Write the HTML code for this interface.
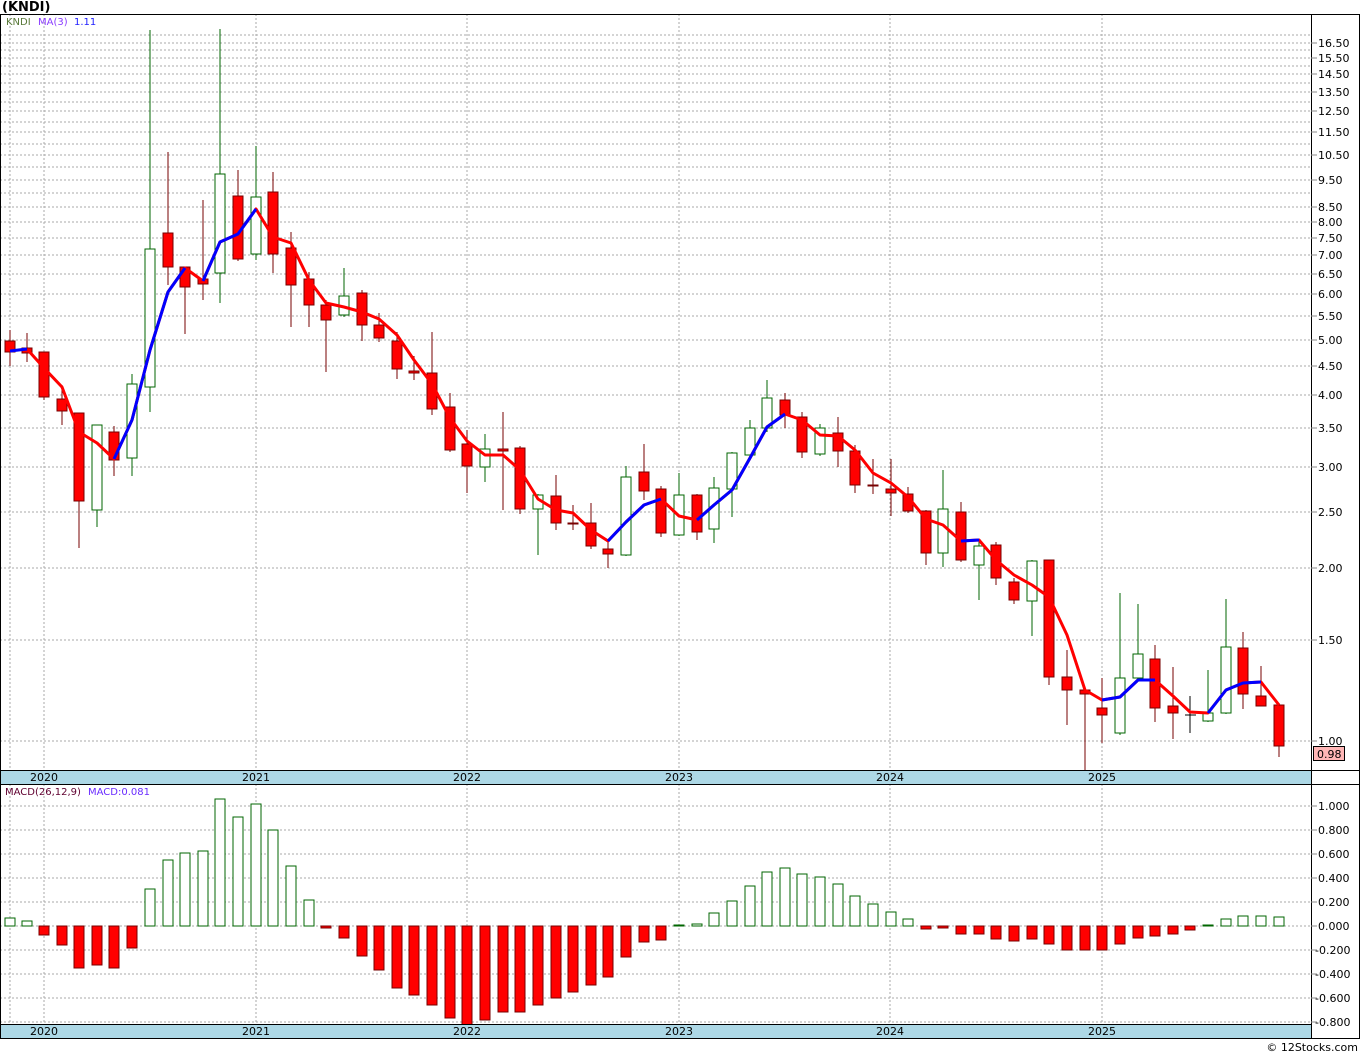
<!DOCTYPE html>
<html><head><meta charset="utf-8"><style>
html,body{margin:0;padding:0;background:#fff;width:1360px;height:1056px;overflow:hidden}
svg{display:block;font-family:"DejaVu Sans","Liberation Sans",sans-serif}
.gr line{stroke:#aaa;stroke-dasharray:2 2;stroke-width:1}
.r rect{fill:#f00;stroke:#700;stroke-width:1}
.r line{stroke:#700;stroke-width:1}
.g rect{fill:#fff;stroke:#060;stroke-width:1}
.g line{stroke:#060;stroke-width:1}
.lab text{font-size:11px;fill:#000}
.mr rect{fill:#f00;stroke:#700}
.mg rect{fill:#fff;stroke:#060}
</style></head><body>
<svg width="1360" height="1056" viewBox="0 0 1360 1056" xmlns="http://www.w3.org/2000/svg">
<text x="2" y="11" font-size="13" font-weight="bold">(KNDI)</text>
<!-- price grid -->
<g class="gr">
<line x1="0" x2="1311" y1="741" y2="741"/><line x1="0" x2="1311" y1="640" y2="640"/><line x1="0" x2="1311" y1="568" y2="568"/><line x1="0" x2="1311" y1="512" y2="512"/><line x1="0" x2="1311" y1="467" y2="467"/><line x1="0" x2="1311" y1="428" y2="428"/><line x1="0" x2="1311" y1="395" y2="395"/><line x1="0" x2="1311" y1="366" y2="366"/><line x1="0" x2="1311" y1="340" y2="340"/><line x1="0" x2="1311" y1="316" y2="316"/><line x1="0" x2="1311" y1="294" y2="294"/><line x1="0" x2="1311" y1="274" y2="274"/><line x1="0" x2="1311" y1="255" y2="255"/><line x1="0" x2="1311" y1="238" y2="238"/><line x1="0" x2="1311" y1="222" y2="222"/><line x1="0" x2="1311" y1="207" y2="207"/><line x1="0" x2="1311" y1="193" y2="193"/><line x1="0" x2="1311" y1="180" y2="180"/><line x1="0" x2="1311" y1="167" y2="167"/><line x1="0" x2="1311" y1="155" y2="155"/><line x1="0" x2="1311" y1="144" y2="144"/><line x1="0" x2="1311" y1="132" y2="132"/><line x1="0" x2="1311" y1="122" y2="122"/><line x1="0" x2="1311" y1="111" y2="111"/><line x1="0" x2="1311" y1="102" y2="102"/><line x1="0" x2="1311" y1="92" y2="92"/><line x1="0" x2="1311" y1="83" y2="83"/><line x1="0" x2="1311" y1="74" y2="74"/><line x1="0" x2="1311" y1="66" y2="66"/><line x1="0" x2="1311" y1="58" y2="58"/><line x1="0" x2="1311" y1="50" y2="50"/><line x1="0" x2="1311" y1="43" y2="43"/><line x1="0" x2="1311" y1="35" y2="35"/>
<line x1="10" x2="10" y1="14" y2="770"/><line x1="44" x2="44" y1="14" y2="770"/><line x1="256" x2="256" y1="14" y2="770"/><line x1="467" x2="467" y1="14" y2="770"/><line x1="679" x2="679" y1="14" y2="770"/><line x1="890" x2="890" y1="14" y2="770"/><line x1="1102" x2="1102" y1="14" y2="770"/>
<line x1="10" x2="10" y1="784" y2="1024"/><line x1="44" x2="44" y1="784" y2="1024"/><line x1="256" x2="256" y1="784" y2="1024"/><line x1="467" x2="467" y1="784" y2="1024"/><line x1="679" x2="679" y1="784" y2="1024"/><line x1="890" x2="890" y1="784" y2="1024"/><line x1="1102" x2="1102" y1="784" y2="1024"/>
<line x1="0" x2="1311" y1="806" y2="806"/><line x1="0" x2="1311" y1="830" y2="830"/><line x1="0" x2="1311" y1="854" y2="854"/><line x1="0" x2="1311" y1="878" y2="878"/><line x1="0" x2="1311" y1="902" y2="902"/><line x1="0" x2="1311" y1="926" y2="926"/><line x1="0" x2="1311" y1="950" y2="950"/><line x1="0" x2="1311" y1="974" y2="974"/><line x1="0" x2="1311" y1="998" y2="998"/><line x1="0" x2="1311" y1="1022" y2="1022"/>
</g>
<text x="6" y="25" font-size="10" fill="#5a7a3a">KNDI</text><text x="38" y="25" font-size="10" fill="#8a3cff">MA(3)</text><text x="74" y="25" font-size="10" fill="#2020ff">1.11</text>
<!-- candles red -->
<g class="r">
<line x1="10" x2="10" y1="330" y2="366"/><rect x="5" y="341" width="10" height="11"/>
<line x1="27" x2="27" y1="333" y2="362"/><rect x="22" y="348" width="10" height="5"/>
<line x1="44" x2="44" y1="352" y2="400"/><rect x="39" y="352" width="10" height="45"/>
<line x1="62" x2="62" y1="385" y2="425"/><rect x="57" y="399" width="10" height="12"/>
<line x1="79" x2="79" y1="413" y2="548"/><rect x="74" y="413" width="10" height="88"/>
<line x1="114" x2="114" y1="426" y2="476"/><rect x="109" y="432" width="10" height="28"/>
<line x1="168" x2="168" y1="152" y2="285"/><rect x="163" y="233" width="10" height="34"/>
<line x1="185" x2="185" y1="267" y2="334"/><rect x="180" y="267" width="10" height="20"/>
<line x1="203" x2="203" y1="200" y2="300"/><rect x="198" y="279" width="10" height="5"/>
<line x1="238" x2="238" y1="170" y2="261"/><rect x="233" y="196" width="10" height="63"/>
<line x1="273" x2="273" y1="172" y2="273"/><rect x="268" y="192" width="10" height="62"/>
<line x1="291" x2="291" y1="232" y2="327"/><rect x="286" y="248" width="10" height="37"/>
<line x1="309" x2="309" y1="272" y2="327"/><rect x="304" y="279" width="10" height="26"/>
<line x1="326" x2="326" y1="300" y2="372"/><rect x="321" y="305" width="10" height="15"/>
<line x1="362" x2="362" y1="290" y2="341"/><rect x="357" y="293" width="10" height="32"/>
<line x1="379" x2="379" y1="313" y2="342"/><rect x="374" y="325" width="10" height="13"/>
<line x1="397" x2="397" y1="332" y2="379"/><rect x="392" y="341" width="10" height="28"/>
<line x1="414" x2="414" y1="356" y2="380"/><rect x="409" y="371" width="10" height="2"/>
<line x1="432" x2="432" y1="332" y2="415"/><rect x="427" y="373" width="10" height="36"/>
<line x1="450" x2="450" y1="393" y2="452"/><rect x="445" y="407" width="10" height="43"/>
<line x1="467" x2="467" y1="430" y2="493"/><rect x="462" y="444" width="10" height="22"/>
<line x1="503" x2="503" y1="412" y2="510"/><rect x="498" y="449" width="10" height="2"/>
<line x1="520" x2="520" y1="446" y2="514"/><rect x="515" y="448" width="10" height="61"/>
<line x1="556" x2="556" y1="475" y2="530"/><rect x="551" y="496" width="10" height="27"/>
<line x1="573" x2="573" y1="505" y2="530"/><rect x="568" y="523" width="10" height="1"/>
<line x1="591" x2="591" y1="503" y2="549"/><rect x="586" y="523" width="10" height="23"/>
<line x1="608" x2="608" y1="540" y2="568"/><rect x="603" y="549" width="10" height="5"/>
<line x1="644" x2="644" y1="444" y2="500"/><rect x="639" y="472" width="10" height="19"/>
<line x1="661" x2="661" y1="486" y2="537"/><rect x="656" y="489" width="10" height="44"/>
<line x1="697" x2="697" y1="494" y2="540"/><rect x="692" y="495" width="10" height="37"/>
<line x1="785" x2="785" y1="393" y2="428"/><rect x="780" y="400" width="10" height="15"/>
<line x1="802" x2="802" y1="412" y2="458"/><rect x="797" y="417" width="10" height="35"/>
<line x1="838" x2="838" y1="417" y2="467"/><rect x="833" y="433" width="10" height="18"/>
<line x1="855" x2="855" y1="445" y2="493"/><rect x="850" y="451" width="10" height="34"/>
<line x1="873" x2="873" y1="459" y2="494"/><rect x="868" y="485" width="10" height="1"/>
<line x1="891" x2="891" y1="459" y2="516"/><rect x="886" y="489" width="10" height="4"/>
<line x1="908" x2="908" y1="487" y2="513"/><rect x="903" y="494" width="10" height="17"/>
<line x1="926" x2="926" y1="510" y2="565"/><rect x="921" y="511" width="10" height="42"/>
<line x1="961" x2="961" y1="502" y2="562"/><rect x="956" y="512" width="10" height="48"/>
<line x1="996" x2="996" y1="542" y2="585"/><rect x="991" y="545" width="10" height="33"/>
<line x1="1014" x2="1014" y1="578" y2="604"/><rect x="1009" y="582" width="10" height="18"/>
<line x1="1049" x2="1049" y1="560" y2="685"/><rect x="1044" y="560" width="10" height="117"/>
<line x1="1067" x2="1067" y1="650" y2="725"/><rect x="1062" y="677" width="10" height="13"/>
<line x1="1085" x2="1085" y1="690" y2="770"/><rect x="1080" y="690" width="10" height="4"/>
<line x1="1102" x2="1102" y1="678" y2="743"/><rect x="1097" y="708" width="10" height="7"/>
<line x1="1155" x2="1155" y1="645" y2="722"/><rect x="1150" y="659" width="10" height="49"/>
<line x1="1173" x2="1173" y1="667" y2="739"/><rect x="1168" y="706" width="10" height="7"/>
<line x1="1243" x2="1243" y1="632" y2="709"/><rect x="1238" y="648" width="10" height="46"/>
<line x1="1261" x2="1261" y1="666" y2="706"/><rect x="1256" y="696" width="10" height="10"/>
<line x1="1279" x2="1279" y1="703" y2="757"/><rect x="1274" y="705" width="10" height="41"/>
</g>
<g stroke="#000"><line x1="1190" x2="1190" y1="696" y2="733"/><line x1="1185" x2="1196" y1="715" y2="715"/></g>
<!-- candles green -->
<g class="g">
<line x1="97" x2="97" y1="425" y2="527"/><rect x="92" y="425" width="10" height="85"/>
<line x1="132" x2="132" y1="374" y2="476"/><rect x="127" y="384" width="10" height="74"/>
<line x1="150" x2="150" y1="30" y2="412"/><rect x="145" y="249" width="10" height="138"/>
<line x1="220" x2="220" y1="29" y2="303"/><rect x="215" y="174" width="10" height="99"/>
<line x1="256" x2="256" y1="146" y2="260"/><rect x="251" y="197" width="10" height="57"/>
<line x1="344" x2="344" y1="268" y2="317"/><rect x="339" y="296" width="10" height="19"/>
<line x1="485" x2="485" y1="434" y2="482"/><rect x="480" y="449" width="10" height="18"/>
<line x1="538" x2="538" y1="494" y2="555"/><rect x="533" y="495" width="10" height="14"/>
<line x1="626" x2="626" y1="466" y2="556"/><rect x="621" y="477" width="10" height="78"/>
<line x1="679" x2="679" y1="473" y2="536"/><rect x="674" y="495" width="10" height="40"/>
<line x1="714" x2="714" y1="477" y2="543"/><rect x="709" y="488" width="10" height="41"/>
<line x1="732" x2="732" y1="452" y2="517"/><rect x="727" y="453" width="10" height="36"/>
<line x1="750" x2="750" y1="420" y2="458"/><rect x="745" y="428" width="10" height="27"/>
<line x1="767" x2="767" y1="380" y2="432"/><rect x="762" y="398" width="10" height="30"/>
<line x1="820" x2="820" y1="424" y2="456"/><rect x="815" y="428" width="10" height="26"/>
<line x1="943" x2="943" y1="470" y2="567"/><rect x="938" y="509" width="10" height="44"/>
<line x1="979" x2="979" y1="540" y2="600"/><rect x="974" y="546" width="10" height="19"/>
<line x1="1032" x2="1032" y1="560" y2="636"/><rect x="1027" y="561" width="10" height="40"/>
<line x1="1120" x2="1120" y1="593" y2="735"/><rect x="1115" y="678" width="10" height="55"/>
<line x1="1138" x2="1138" y1="604" y2="680"/><rect x="1133" y="654" width="10" height="24"/>
<line x1="1208" x2="1208" y1="670" y2="722"/><rect x="1203" y="713" width="10" height="8"/>
<line x1="1226" x2="1226" y1="599" y2="714"/><rect x="1221" y="647" width="10" height="66"/>
</g>
<!-- MA -->
<polyline fill="none" stroke="#f00" stroke-width="3" stroke-linejoin="round" points="27,349 44,368 62,387 79,432 97,443 114,459 132,420 150,350 168,292 185,268 203,281 220,242 238,234 256,209 273,237 291,243 309,280 326,303 344,307 362,312 379,319 397,335 414,360 432,384 450,418 467,441 485,455 503,455 520,470 538,499 556,510 573,513 591,530 608,541 626,522 644,505 661,499 679,516 697,520 714,505 732,490 750,458 767,427 785,414 802,420 820,435 838,436 855,450 873,473 891,483 908,497 926,519 943,525 961,541 979,540 996,560 1014,575 1032,585 1049,597 1067,635 1085,690 1102,700 1120,697 1138,680 1155,680 1173,696 1190,712 1208,713 1226,690 1243,683 1261,682 1279,705"/>
<g fill="none" stroke="#00f" stroke-width="3" stroke-linejoin="round">
<polyline points="10,351 27,349"/>
<polyline points="114,459 132,420 150,350 168,292 185,268"/>
<polyline points="203,281 220,242 238,234 256,209"/>
<polyline points="608,541 626,522 644,505 661,499"/>
<polyline points="697,520 714,505 732,490 750,458 767,427 785,414"/>
<polyline points="961,541 979,540"/>
<polyline points="1102,700 1120,697 1138,680 1155,680"/>
<polyline points="1208,713 1226,690 1243,683 1261,682"/>
</g>
<!-- MACD -->
<text x="5" y="795" font-size="10" fill="#600030">MACD(26,12,9)</text><text x="88" y="795" font-size="10" fill="#6a2cff">MACD:0.081</text>
<g class="mg">
<rect x="5" y="918" width="10" height="8"/><rect x="22" y="921" width="10" height="5"/>
<rect x="145" y="889" width="10" height="37"/><rect x="163" y="860" width="10" height="66"/><rect x="180" y="853" width="10" height="73"/><rect x="198" y="851" width="10" height="75"/><rect x="215" y="799" width="10" height="127"/><rect x="233" y="817" width="10" height="109"/><rect x="251" y="804" width="10" height="122"/><rect x="268" y="830" width="10" height="96"/><rect x="286" y="866" width="10" height="60"/><rect x="304" y="900" width="10" height="26"/>
<rect x="674" y="925" width="10" height="1"/><rect x="692" y="924" width="10" height="2"/><rect x="709" y="913" width="10" height="13"/><rect x="727" y="901" width="10" height="25"/><rect x="745" y="886" width="10" height="40"/><rect x="762" y="872" width="10" height="54"/><rect x="780" y="868" width="10" height="58"/><rect x="797" y="874" width="10" height="52"/><rect x="815" y="877" width="10" height="49"/><rect x="833" y="884" width="10" height="42"/><rect x="850" y="896" width="10" height="30"/><rect x="868" y="904" width="10" height="22"/><rect x="886" y="912" width="10" height="14"/><rect x="903" y="919" width="10" height="7"/>
<rect x="1203" y="925" width="10" height="1"/><rect x="1221" y="919" width="10" height="7"/><rect x="1238" y="916" width="10" height="10"/><rect x="1256" y="916" width="10" height="10"/><rect x="1274" y="917" width="10" height="9"/>
</g>
<g class="mr">
<rect x="39" y="926" width="10" height="9"/><rect x="57" y="926" width="10" height="19"/><rect x="74" y="926" width="10" height="42"/><rect x="92" y="926" width="10" height="39"/><rect x="109" y="926" width="10" height="42"/><rect x="127" y="926" width="10" height="22"/>
<rect x="321" y="926" width="10" height="2"/><rect x="339" y="926" width="10" height="12"/><rect x="357" y="926" width="10" height="30"/><rect x="374" y="926" width="10" height="44"/><rect x="392" y="926" width="10" height="62"/><rect x="409" y="926" width="10" height="69"/><rect x="427" y="926" width="10" height="79"/><rect x="445" y="926" width="10" height="92"/><rect x="462" y="926" width="10" height="99"/><rect x="480" y="926" width="10" height="94"/><rect x="498" y="926" width="10" height="86"/><rect x="515" y="926" width="10" height="86"/><rect x="533" y="926" width="10" height="79"/><rect x="551" y="926" width="10" height="72"/><rect x="568" y="926" width="10" height="66"/><rect x="586" y="926" width="10" height="59"/><rect x="603" y="926" width="10" height="51"/><rect x="621" y="926" width="10" height="31"/><rect x="639" y="926" width="10" height="16"/><rect x="656" y="926" width="10" height="14"/>
<rect x="921" y="926" width="10" height="3"/><rect x="938" y="926" width="10" height="2"/><rect x="956" y="926" width="10" height="8"/><rect x="974" y="926" width="10" height="8"/><rect x="991" y="926" width="10" height="13"/><rect x="1009" y="926" width="10" height="15"/><rect x="1027" y="926" width="10" height="13"/><rect x="1044" y="926" width="10" height="18"/><rect x="1062" y="926" width="10" height="24"/><rect x="1080" y="926" width="10" height="24"/><rect x="1097" y="926" width="10" height="24"/><rect x="1115" y="926" width="10" height="18"/><rect x="1133" y="926" width="10" height="12"/><rect x="1150" y="926" width="10" height="10"/><rect x="1168" y="926" width="10" height="8"/><rect x="1185" y="926" width="10" height="4"/>
</g>
<!-- bands -->
<rect x="0" y="770" width="1311" height="14" fill="#add8e6"/>
<rect x="0" y="1024" width="1311" height="14" fill="#add8e6"/>
<g font-size="11" text-anchor="middle">
<text x="44" y="781">2020</text><text x="256" y="781">2021</text><text x="467" y="781">2022</text><text x="679" y="781">2023</text><text x="890" y="781">2024</text><text x="1102" y="781">2025</text>
<text x="44" y="1035">2020</text><text x="256" y="1035">2021</text><text x="467" y="1035">2022</text><text x="679" y="1035">2023</text><text x="890" y="1035">2024</text><text x="1102" y="1035">2025</text>
</g>
<!-- frames -->
<g stroke="#000" stroke-width="1" fill="none">
<rect x="0.5" y="14.5" width="1359" height="1024"/>
<line x1="0" x2="1360" y1="770.5" y2="770.5"/><line x1="0" x2="1360" y1="784.5" y2="784.5"/><line x1="0" x2="1311" y1="1024.5" y2="1024.5"/>
<line x1="1311.5" x2="1311.5" y1="14" y2="1038"/>
</g>
<!-- right axis -->
<g stroke="#888">
<line x1="1311" x2="1317" y1="741" y2="741"/><line x1="1311" x2="1317" y1="640" y2="640"/><line x1="1311" x2="1317" y1="568" y2="568"/><line x1="1311" x2="1317" y1="512" y2="512"/><line x1="1311" x2="1317" y1="467" y2="467"/><line x1="1311" x2="1317" y1="428" y2="428"/><line x1="1311" x2="1317" y1="395" y2="395"/><line x1="1311" x2="1317" y1="366" y2="366"/><line x1="1311" x2="1317" y1="340" y2="340"/><line x1="1311" x2="1317" y1="316" y2="316"/><line x1="1311" x2="1317" y1="294" y2="294"/><line x1="1311" x2="1317" y1="274" y2="274"/><line x1="1311" x2="1317" y1="255" y2="255"/><line x1="1311" x2="1317" y1="238" y2="238"/><line x1="1311" x2="1317" y1="222" y2="222"/><line x1="1311" x2="1317" y1="207" y2="207"/><line x1="1311" x2="1317" y1="180" y2="180"/><line x1="1311" x2="1317" y1="155" y2="155"/><line x1="1311" x2="1317" y1="132" y2="132"/><line x1="1311" x2="1317" y1="111" y2="111"/><line x1="1311" x2="1317" y1="92" y2="92"/><line x1="1311" x2="1317" y1="74" y2="74"/><line x1="1311" x2="1317" y1="58" y2="58"/><line x1="1311" x2="1317" y1="43" y2="43"/>
<line x1="1311" x2="1317" y1="806" y2="806"/><line x1="1311" x2="1317" y1="830" y2="830"/><line x1="1311" x2="1317" y1="854" y2="854"/><line x1="1311" x2="1317" y1="878" y2="878"/><line x1="1311" x2="1317" y1="902" y2="902"/><line x1="1311" x2="1317" y1="926" y2="926"/><line x1="1311" x2="1317" y1="950" y2="950"/><line x1="1311" x2="1317" y1="974" y2="974"/><line x1="1311" x2="1317" y1="998" y2="998"/><line x1="1311" x2="1317" y1="1022" y2="1022"/>
</g>
<g class="lab" font-size="11">
<text x="1318" y="745">1.00</text><text x="1318" y="644">1.50</text><text x="1318" y="572">2.00</text><text x="1318" y="516">2.50</text><text x="1318" y="471">3.00</text><text x="1318" y="432">3.50</text><text x="1318" y="399">4.00</text><text x="1318" y="370">4.50</text><text x="1318" y="344">5.00</text><text x="1318" y="320">5.50</text><text x="1318" y="298">6.00</text><text x="1318" y="278">6.50</text><text x="1318" y="259">7.00</text><text x="1318" y="242">7.50</text><text x="1318" y="226">8.00</text><text x="1318" y="211">8.50</text><text x="1318" y="184">9.50</text><text x="1318" y="159">10.50</text><text x="1318" y="136">11.50</text><text x="1318" y="115">12.50</text><text x="1318" y="96">13.50</text><text x="1318" y="78">14.50</text><text x="1318" y="62">15.50</text><text x="1318" y="47">16.50</text>
<text x="1318" y="810">1.000</text><text x="1318" y="834">0.800</text><text x="1318" y="858">0.600</text><text x="1318" y="882">0.400</text><text x="1318" y="906">0.200</text><text x="1318" y="930">0.000</text><text x="1315" y="954">-0.200</text><text x="1315" y="978">-0.400</text><text x="1315" y="1002">-0.600</text><text x="1315" y="1026">-0.800</text>
</g>
<rect x="1313.5" y="746.5" width="31" height="14" fill="#ffb6b6" stroke="#000"/>
<text x="1317" y="758" font-size="11">0.98</text>
<text x="1358" y="1051" font-size="11" text-anchor="end">© 12Stocks.com</text>
</svg>
</body></html>
